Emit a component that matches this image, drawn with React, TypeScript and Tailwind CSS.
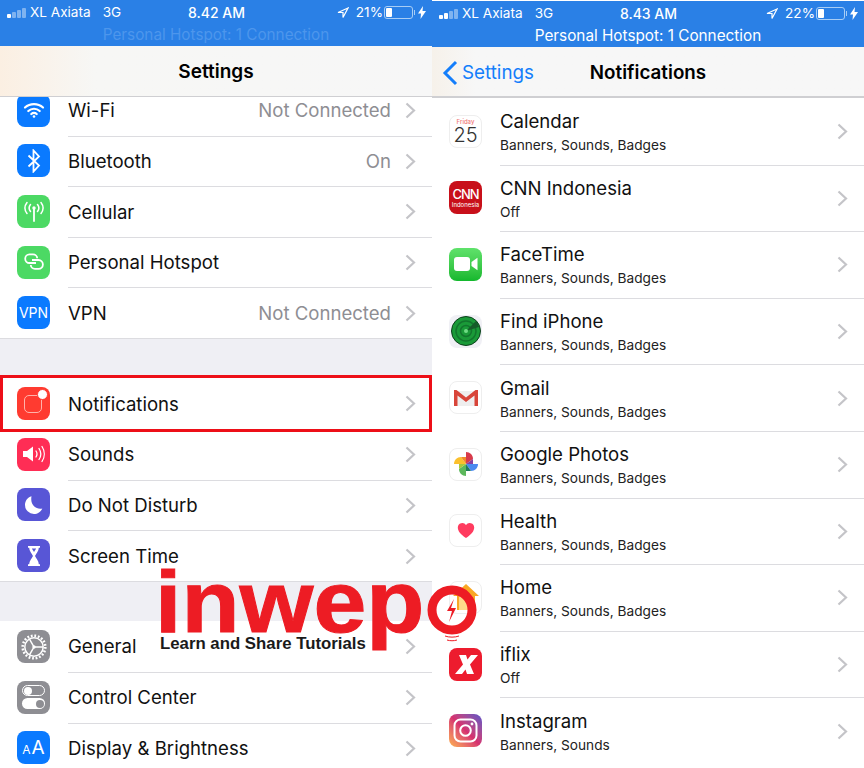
import type { ReactNode } from "react";

const Chevron = () => (
  <svg width="11" height="17" viewBox="0 0 11 17" fill="none" stroke="#c4c4c8" strokeWidth="2.2">
    <path d="M1.5 1.5 9 8.500l-7.500 7" />
  </svg>
);

const Tile = ({ className, children }: { className: string; children?: ReactNode }) => (
  <div className={`relative flex h-[33px] w-[33px] shrink-0 items-center justify-center overflow-hidden rounded-[8px] ${className}`}>
    {children}
  </div>
);

const WifiIcon = () => (
  <svg width="22" height="18" viewBox="0 0 22 18" fill="none" stroke="#fff" strokeWidth="2.200" strokeLinecap="round">
    <path d="M2 6.500c5-4.600 13-4.600 18 0M5.300 10c3.200-3 8.200-3 11.400 0M8.300 13c1.500-1.300 3.900-1.300 5.400 0" />
    <circle cx="11" cy="15.500" r="1.300" fill="#fff" stroke="none" />
  </svg>
);
const BluetoothIcon = () => (
  <svg width="14" height="24" viewBox="0 0 14 24" fill="none" stroke="#fff" strokeWidth="1.800">
    <path d="M1.500 6.500 12 16.500 6.500 22.500V1.500L12 7.500 1.500 17.500" />
  </svg>
);
const CellularIcon = () => (
  <svg width="24" height="24" viewBox="0 0 24 24" fill="none" stroke="#fff" strokeWidth="1.500" strokeLinecap="round">
    <path d="M12 10v12" strokeWidth="1.800" />
    <circle cx="12" cy="9" r="1.700" fill="#fff" stroke="none" />
    <path d="M8.500 5.500c-1.600 2-1.600 5 0 7M15.500 5.500c1.600 2 1.600 5 0 7M5 3.500c-2.600 3.400-2.600 7.600 0 11M19 3.500c2.600 3.400 2.600 7.600 0 11" />
  </svg>
);
const HotspotIcon = () => (
  <svg width="24" height="20" viewBox="0 0 24 20" fill="none" stroke="#fff" strokeWidth="1.800">
    <path d="M14 11H7.500a4.300 4.300 0 0 1 0-8.600H11c2.400 0 4.200 1.800 4.200 3.800" />
    <path d="M10 8h6.500a4.400 4.400 0 0 1 0 8.800H13c-2.400 0-4.200-1.800-4.200-3.800" />
  </svg>
);
const NotificationsIcon = () => (
  <>
    <div className="absolute left-[7px] top-[8px] h-[18px] w-[18px] rounded-[5px] border border-[#ffb3ab]" />
    <div className="absolute right-[2px] top-[2px] h-[11px] w-[11px] rounded-full border border-[#ff3b30] bg-white" />
  </>
);
const SoundsIcon = () => (
  <svg width="24" height="20" viewBox="0 0 24 20" fill="none" stroke="#fff" strokeWidth="1.300" strokeLinecap="round">
    <path d="M1 7h4l6-4.500v15L5 13H1z" fill="#fff" stroke="none" />
    <path d="M14 7c1.200 1.800 1.200 4.200 0 6M17 4.500c2.200 3.300 2.200 7.700 0 11M20 2.500c3 4.500 3 10.500 0 15" />
  </svg>
);
const MoonIcon = () => (
  <svg width="20" height="20" viewBox="0 0 20 20">
    <path d="M7.500 1.200C3.500 2.500 1 5.900 1 10a9 9 0 0 0 9 9c3.600 0 6.900-2.100 8.300-5.600-5.700 1.500-12.500-3.300-10.800-12.200z" fill="#fff" />
  </svg>
);
const HourglassIcon = () => (
  <svg width="16" height="22" viewBox="0 0 16 22">
    <path d="M2 1h12v1.800h-1.200c0 3-2.400 5.700-3.800 8.200 1.400 2.500 3.800 5.200 3.800 8.200H14V21H2v-1.800h1.200c0-3 2.400-5.700 3.800-8.200-1.400-2.500-3.800-5.200-3.800-8.200H2z" fill="#fff" />
    <path d="M5.800 3.500h4.400L8 7z" fill="#5856d6" />
  </svg>
);
const GearIcon = () => (
  <svg width="28" height="28" viewBox="0 0 28 28" fill="none" stroke="#fff">
    <circle cx="14" cy="14" r="11.300" strokeWidth="2.600" strokeDasharray="1.800 1.750" />
    <circle cx="14" cy="14" r="9.200" strokeWidth="1.500" />
    <path d="M14 14h9M14 14 9.500 6.200M14 14l-4.500 7.800" strokeWidth="1.500" />
    <circle cx="14" cy="14" r="1.700" fill="#fff" stroke="none" />
  </svg>
);
const ToggleIcon = () => (
  <div className="flex flex-col gap-[2px]">
    <div className="flex h-[11px] w-[23px] items-center justify-start rounded-full border border-white px-[1px]">
      <div className="h-[8px] w-[8px] rounded-full bg-white" />
    </div>
    <div className="flex h-[11px] w-[23px] items-center justify-end rounded-full bg-white px-[1px]">
      <div className="h-[8px] w-[8px] rounded-full bg-[#8e8e93]" />
    </div>
  </div>
);

const settingsGroups: { label: string; value?: string; tile: string; icon: ReactNode; outlined?: boolean }[][] = [
  [
    { label: "Wi-Fi", value: "Not Connected", tile: "bg-[#0a7aff]", icon: <WifiIcon /> },
    { label: "Bluetooth", value: "On", tile: "bg-[#0a7aff]", icon: <BluetoothIcon /> },
    { label: "Cellular", tile: "bg-[#4cd964]", icon: <CellularIcon /> },
    { label: "Personal Hotspot", tile: "bg-[#4cd964]", icon: <HotspotIcon /> },
    { label: "VPN", value: "Not Connected", tile: "bg-[#0a7aff]", icon: <span className="text-[14px] text-white">VPN</span> },
  ],
  [
    { label: "Notifications", tile: "bg-[#ff3b30]", icon: <NotificationsIcon />, outlined: true },
    { label: "Sounds", tile: "bg-[#ff2d55]", icon: <SoundsIcon /> },
    { label: "Do Not Disturb", tile: "bg-[#5856d6]", icon: <MoonIcon /> },
    { label: "Screen Time", tile: "bg-[#5856d6]", icon: <HourglassIcon /> },
  ],
  [
    { label: "General", tile: "bg-[#8e8e93]", icon: <GearIcon /> },
    { label: "Control Center", tile: "bg-[#8e8e93]", icon: <ToggleIcon /> },
    { label: "Display & Brightness", tile: "bg-[#0a7aff]", icon: <span className="text-white"><span className="text-[12px]">A</span><span className="ml-[1px] text-[19px]">A</span></span> },
  ],
];

const CalendarIcon = () => (
  <div className="flex flex-col items-center leading-none">
    <span className="text-[6px] font-medium text-[#f0787a]">Friday</span>
    <span className="mt-[1px] text-[20px] font-light leading-[18px] text-[#333]">25</span>
  </div>
);
const CnnIcon = () => (
  <div className="flex flex-col items-center leading-none text-white">
    <span className="text-[13px] font-medium tracking-[-1px]">CNN</span>
    <span className="mt-[1px] text-[6px]">Indonesia</span>
  </div>
);
const FaceTimeIcon = () => (
  <svg width="26" height="16" viewBox="0 0 26 16" fill="#fff">
    <rect x="1" y="1" width="16" height="14" rx="3" />
    <path d="M18.500 6 24.500 1.800v12.400L18.500 10z" />
  </svg>
);
const RadarIcon = () => (
  <svg width="30" height="30" viewBox="0 0 30 30" fill="none">
    <circle cx="15" cy="15" r="14.500" fill="#1a9a38" stroke="#0d3f1c" strokeWidth="1" />
    <circle cx="15" cy="15" r="10" stroke="#12752d" strokeWidth="1.500" />
    <circle cx="15" cy="15" r="5.500" stroke="#12752d" strokeWidth="1.500" />
    <path d="M15 15 25 5a14 14 0 0 1 3 6z" fill="#155c2a" />
    <circle cx="15" cy="15" r="2" fill="#6fdc85" />
  </svg>
);
const GmailIcon = () => (
  <svg width="26" height="20" viewBox="0 0 26 20">
    <path d="M2 3h22v15H2z" fill="#eeeeee" />
    <path d="M1 2h2.500L13 9.500 22.500 2H25v16h-3.500V7.500L13 14 4.500 7.500V18H1z" fill="#d8453a" />
  </svg>
);
const PhotosIcon = () => (
  <svg width="28" height="28" viewBox="0 0 28 28">
    <path d="M14 14V2c4 0 7 3 7 7z" fill="#d83b4b" />
    <path d="M14 14h12c0 4-3 7-7 7z" fill="#4a8af0" />
    <path d="M14 14v12c-4 0-7-3-7-7z" fill="#5cb85c" />
    <path d="M14 14H2c0-4 3-7 7-7z" fill="#fbc02d" />
    <path d="M14 14V7c-2.700 0-5 0-5 0z" fill="#ef8b2c" />
    <path d="M14 14h7c0-2.700 0-5 0-5z" fill="#8a3f9d" />
    <path d="M14 14v7c2.700 0 5 0 5 0z" fill="#1f7a5c" />
    <path d="M14 14H7c0 2.700 0 5 0 5z" fill="#a9c83a" />
  </svg>
);
const HeartIcon = () => (
  <svg width="18" height="17" viewBox="0 0 18 17">
    <path d="M9 16C3.500 12 .8 9 .8 5.400A4.500 4.500 0 0 1 9 3a4.500 4.500 0 0 1 8.200 2.400C17.200 9 14.500 12 9 16z" fill="#ff3b5f" />
  </svg>
);
const HomeIcon = () => (
  <svg width="30" height="30" viewBox="0 0 30 30">
    <path d="M15 2 28 14h-4v14H6V14H2z" fill="#f9a825" />
    <path d="M15 9 22 15v13H8V15z" fill="#ffd98a" />
  </svg>
);
const IflixIcon = () => (
  <svg width="25" height="25" viewBox="0 0 25 25">
    <path d="M6 3h7l1.500 4.500L18 3h7l-8 9.500 4 9.500h-7l-1.500-4.500L9 22H2l8-9.500z" fill="#fff" />
  </svg>
);
const InstagramIcon = () => (
  <svg width="25" height="25" viewBox="0 0 25 25" fill="none" stroke="#fff" strokeWidth="2">
    <rect x="1.500" y="1.500" width="22" height="22" rx="6" />
    <circle cx="12.500" cy="12.500" r="5.300" />
    <circle cx="19" cy="6" r="1.400" fill="#fff" stroke="none" />
  </svg>
);

const BANNERS = "Banners, Sounds, Badges";
const apps: { name: string; sub: string; tile: string; icon: ReactNode }[] = [
  { name: "Calendar", sub: BANNERS, tile: "bg-white border border-[#eeeeee]", icon: <CalendarIcon /> },
  { name: "CNN Indonesia", sub: "Off", tile: "bg-[#c8101a]", icon: <CnnIcon /> },
  { name: "FaceTime", sub: BANNERS, tile: "bg-gradient-to-b from-[#5fe26b] to-[#12b82d]", icon: <FaceTimeIcon /> },
  { name: "Find iPhone", sub: BANNERS, tile: "bg-[#f0f0f5]", icon: <RadarIcon /> },
  { name: "Gmail", sub: BANNERS, tile: "bg-white border border-[#eeeeee]", icon: <GmailIcon /> },
  { name: "Google Photos", sub: BANNERS, tile: "bg-white border border-[#eeeeee]", icon: <PhotosIcon /> },
  { name: "Health", sub: BANNERS, tile: "bg-white border border-[#eeeeee]", icon: <HeartIcon /> },
  { name: "Home", sub: BANNERS, tile: "bg-white border border-[#eeeeee]", icon: <HomeIcon /> },
  { name: "iflix", sub: "Off", tile: "bg-[#ed1c2e]", icon: <IflixIcon /> },
  { name: "Instagram", sub: "Banners, Sounds", tile: "bg-gradient-to-tr from-[#fdb14b] via-[#d6306f] to-[#5b4fc9]", icon: <InstagramIcon /> },
];

const StatusBar = ({ time, battery, hotspotClass, signal }: { time: string; battery: string; hotspotClass: string; signal: number }) => (
  <div className="h-[46px] shrink-0 bg-[#2a80e6] text-white">
    <div className="grid h-[25px] grid-cols-[1fr_auto_1fr] items-center pl-[7px] pr-[6px] text-[13.600px] leading-none">
      <div className="flex items-center">
        <div className="flex items-end gap-[1px]">
          {[4, 6, 8, 10].map((h, i) => (
            <div key={h} className={i < signal ? "w-[4px] rounded-[1px] bg-white" : "w-[4px] rounded-[1px] bg-[#7fb3f0]"} style={{ height: h }} />
          ))}
        </div>
        <span className="ml-[4px]">XL Axiata</span>
        <span className="ml-[12px]">3G</span>
      </div>
      <span className="text-[14px] font-medium">{time}</span>
      <div className="flex items-center justify-end">
        <svg width="12" height="12" viewBox="0 0 12 12" fill="none" stroke="#fff" strokeWidth="1.200">
          <path d="M11 1 1 5.500h5V10.500z" />
        </svg>
        <span className="ml-[7px]">{battery}</span>
        <div className="ml-[1px] flex h-[13px] w-[29px] items-center rounded-[3px] border border-[#a8cdf5] px-[1px]">
          <div className="h-[9px] w-[6px] rounded-[1px] bg-white" />
        </div>
        <div className="ml-[1px] h-[5px] w-[1px] bg-[#a8cdf5]" />
        <svg className="ml-[3px]" width="8" height="13" viewBox="0 0 8 13" fill="#fff">
          <path d="M5 0 0 7.500h3L2.500 13 8 5H4.500z" />
        </svg>
      </div>
    </div>
    <div className={`text-center text-[15.300px] leading-[19px] ${hotspotClass}`}>Personal Hotspot: 1 Connection</div>
  </div>
);

function SettingsScreen() {
  return (
    <div className="flex h-full w-[432px] flex-col bg-[#efeff4]">
      <StatusBar time="8.42 AM" battery="21%" hotspotClass="text-[#4d96ec]" signal={1} />
      <div className="relative z-10 flex h-[51px] shrink-0 items-center justify-center border-b border-[#cfcfd2] bg-gradient-to-r from-[#fbefe2] via-[#f7f7f5] via-[22%] to-[#f7f7f7] pt-[2px] text-[19px] font-semibold text-black">
        Settings
      </div>
      <div className="-mt-[12px] flex flex-col gap-[39.500px]">
        {settingsGroups.map((group) => (
          <div key={group[0].label} className="border-b border-[#dcdce0] bg-white">
            {group.map((row, i) => (
              <div key={row.label} className="relative flex h-[50.600px] items-center pl-[17px]">
                <Tile className={row.tile}>{row.icon}</Tile>
                <div className={`ml-[18px] flex h-full flex-1 items-center pr-[16px] ${i > 0 ? "border-t border-[#dcdce0]" : ""}`}>
                  <span className={`flex-1 text-[18.600px] text-[#111] ${row.outlined ? "pt-[3px]" : "pt-[1px]"}`}>{row.label}</span>
                  {row.value && <span className="mr-[14px] pt-[1px] text-[18.600px] text-[#8e8e93]">{row.value}</span>}
                  <Chevron />
                </div>
                {row.outlined && <div className="absolute -bottom-[3px] -top-[3px] left-0 right-0 z-10 border-[3px] border-[#ed0f18]" />}
              </div>
            ))}
          </div>
        ))}
      </div>
    </div>
  );
}

function NotificationsScreen() {
  return (
    <div className="flex h-full w-[432px] flex-col bg-white pt-[1px]">
      <StatusBar time="8.43 AM" battery="22%" hotspotClass="text-white" signal={2} />
      <div className="grid h-[51px] shrink-0 grid-cols-[1fr_auto_1fr] items-center border-b-2 border-[#cfcfd2] bg-gradient-to-r from-[#f6f1ea] via-[#f7f7f7] via-[10%] to-[#f7f7f7] pt-[3px] text-[18.800px]">
        <div className="flex items-center pl-[10px] text-[#147efb]">
          <svg width="16" height="26" viewBox="0 0 16 26" fill="none" stroke="#147efb" strokeWidth="3">
            <path d="M14 2 3 13l11 11" />
          </svg>
          <span className="ml-[4px]">Settings</span>
        </div>
        <span className="font-semibold text-black">Notifications</span>
        <div />
      </div>
      {apps.map((app, i) => (
        <div key={app.name} className="flex h-[66.600px] shrink-0 items-center pl-[17px]">
          <Tile className={app.tile}>{app.icon}</Tile>
          <div className={`ml-[18px] flex h-full flex-1 items-center pr-[16px] ${i > 0 ? "border-t border-[#dcdce0]" : ""}`}>
            <div className="flex-1 pt-[2px]">
              <div className="text-[18.600px] leading-[25px] text-[#111]">{app.name}</div>
              <div className="text-[13.700px] leading-[22px] text-[#222]">{app.sub}</div>
            </div>
            <Chevron />
          </div>
        </div>
      ))}
    </div>
  );
}

function Watermark() {
  return (
    <div className="absolute left-[155px] top-[545px] z-20">
      <div className="flex items-start">
        <span className="inline-block w-[270px] origin-left scale-x-[1.08] whitespace-nowrap font-['Liberation_Sans',sans-serif] text-[88px] font-bold leading-[113px] text-[#ed1c24] [-webkit-text-stroke:1px_#ed1c24]">inwep</span>
        <svg className="ml-[2px] mt-[40px]" width="50" height="58" viewBox="0 0 50 58" fill="none">
          <circle cx="25" cy="25" r="20" stroke="#ed1c24" strokeWidth="9" />
          <path d="M27 14 20 26h5l-3 11 7-14h-5z" fill="#ed1c24" />
          <path d="M18 51c4 1.500 10 1.500 14 0M20 55c3 1 7 1 10 0" stroke="#ed1c24" strokeWidth="1" />
        </svg>
      </div>
      <div className="-mt-[24px] pl-[5px] font-['Liberation_Sans',sans-serif] text-[16.800px] font-bold leading-[20px] text-[#1a1a1a]">
        Learn and Share Tutorials
      </div>
    </div>
  );
}

export default function App() {
  return (
    <div className="relative flex h-[768px] w-[864px] overflow-hidden bg-white font-['Inter',sans-serif]">
      <SettingsScreen />
      <NotificationsScreen />
      <Watermark />
    </div>
  );
}
